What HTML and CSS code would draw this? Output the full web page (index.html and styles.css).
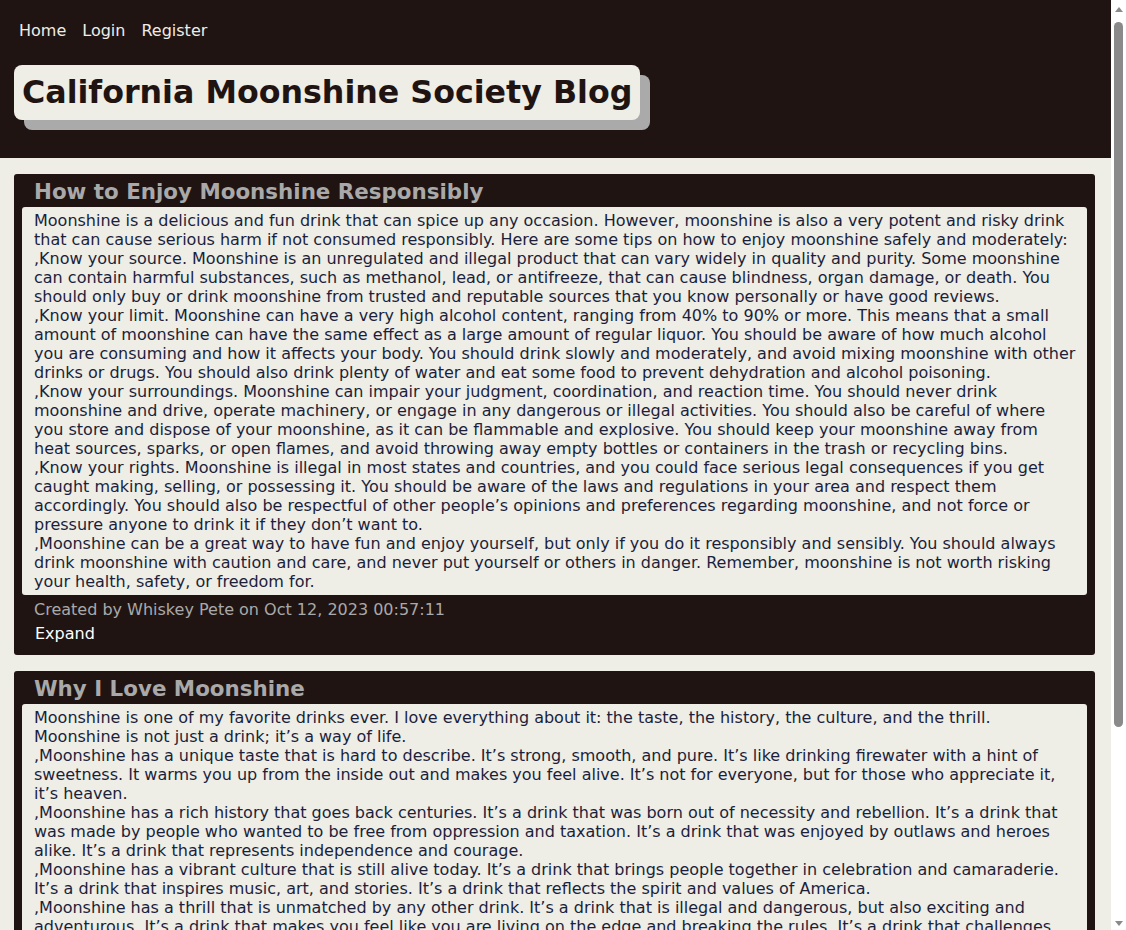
FILE: index.html
```html
<!DOCTYPE html>
<html lang="en">
<head>
<meta charset="utf-8">
<title>California Moonshine Society Blog</title>
<link rel="stylesheet" href="styles.css">
</head>
<body>
<header class="site-header">
  <nav class="nav">
    <a href="#" class="nav-link">Home</a>
    <a href="#" class="nav-link">Login</a>
    <a href="#" class="nav-link">Register</a>
  </nav>
  <div class="title-wrap">
    <h1 class="site-title">California Moonshine Society Blog</h1>
  </div>
</header>
<main class="posts">
  <article class="post">
    <h2 class="post-title">How to Enjoy Moonshine Responsibly</h2>
    <div class="post-body">Moonshine is a delicious and fun drink that can spice up any occasion. However, moonshine is also a very potent and risky drink that can cause serious harm if not consumed responsibly. Here are some tips on how to enjoy moonshine safely and moderately:<br>,Know your source. Moonshine is an unregulated and illegal product that can vary widely in quality and purity. Some moonshine can contain harmful substances, such as methanol, lead, or antifreeze, that can cause blindness, organ damage, or death. You should only buy or drink moonshine from trusted and reputable sources that you know personally or have good reviews.<br>,Know your limit. Moonshine can have a very high alcohol content, ranging from 40% to 90% or more. This means that a small amount of moonshine can have the same effect as a large amount of regular liquor. You should be aware of how much alcohol you are consuming and how it affects your body. You should drink slowly and moderately, and avoid mixing moonshine with other drinks or drugs. You should also drink plenty of water and eat some food to prevent dehydration and alcohol poisoning.<br>,Know your surroundings. Moonshine can impair your judgment, coordination, and reaction time. You should never drink moonshine and drive, operate machinery, or engage in any dangerous or illegal activities. You should also be careful of where you store and dispose of your moonshine, as it can be flammable and explosive. You should keep your moonshine away from heat sources, sparks, or open flames, and avoid throwing away empty bottles or containers in the trash or recycling bins.<br>,Know your rights. Moonshine is illegal in most states and countries, and you could face serious legal consequences if you get caught making, selling, or possessing it. You should be aware of the laws and regulations in your area and respect them accordingly. You should also be respectful of other people’s opinions and preferences regarding moonshine, and not force or pressure anyone to drink it if they don’t want to.<br>,Moonshine can be a great way to have fun and enjoy yourself, but only if you do it responsibly and sensibly. You should always drink moonshine with caution and care, and never put yourself or others in danger. Remember, moonshine is not worth risking your health, safety, or freedom for.</div>
    <div class="post-meta">Created by Whiskey Pete on Oct 12, 2023 00:57:11</div>
    <a href="#" class="post-expand">Expand</a>
  </article>
  <article class="post">
    <h2 class="post-title">Why I Love Moonshine</h2>
    <div class="post-body">Moonshine is one of my favorite drinks ever. I love everything about it: the taste, the history, the culture, and the thrill. Moonshine is not just a drink; it’s a way of life.<br>,Moonshine has a unique taste that is hard to describe. It’s strong, smooth, and pure. It’s like drinking firewater with a hint of sweetness. It warms you up from the inside out and makes you feel alive. It’s not for everyone, but for those who appreciate it, it’s heaven.<br>,Moonshine has a rich history that goes back centuries. It’s a drink that was born out of necessity and rebellion. It’s a drink that was made by people who wanted to be free from oppression and taxation. It’s a drink that was enjoyed by outlaws and heroes alike. It’s a drink that represents independence and courage.<br>,Moonshine has a vibrant culture that is still alive today. It’s a drink that brings people together in celebration and camaraderie. It’s a drink that inspires music, art, and stories. It’s a drink that reflects the spirit and values of America.<br>,Moonshine has a thrill that is unmatched by any other drink. It’s a drink that is illegal and dangerous, but also exciting and adventurous. It’s a drink that makes you feel like you are living on the edge and breaking the rules. It’s a drink that challenges you to be bold and brave.<br>,That’s why I love moonshine. It’s more than a drink; it’s a passion.</div>
    <div class="post-meta">Created by Whiskey Pete on Oct 11, 2023 21:14:03</div>
    <a href="#" class="post-expand">Expand</a>
  </article>
</main>
<div class="scrollbar" aria-hidden="true">
  <div class="scroll-arrow scroll-arrow-up"></div>
  <div class="scroll-thumb"></div>
  <div class="scroll-arrow scroll-arrow-down"></div>
</div>
</body>
</html>
```

FILE: styles.css
```css
html, body {
  margin: 0;
  padding: 0;
}

body {
  background: #eeede6;
  font-family: "DejaVu Sans", Verdana, sans-serif;
  font-size: 16px;
  line-height: 19px;
  color: #1b1f3b;
  margin-right: 15px;
}

.site-header {
  background: #201412;
  padding: 21px 0 38px 0;
}

.nav {
  display: flex;
  gap: 16px;
  padding: 0 19px;
  height: 19px;
}

.nav-link {
  color: #eeede6;
  text-decoration: none;
  font-size: 16px;
  line-height: 19px;
}

.title-wrap {
  padding: 25px 0 0 14px;
}

.site-title {
  display: inline-block;
  margin: 0;
  padding: 7px 8px;
  background: #eeede6;
  color: #201412;
  font-size: 31.7px;
  line-height: 41px;
  font-weight: bold;
  border-radius: 8px;
  box-shadow: 10px 10px 0 #aaaaaa;
}

.posts {
  display: flex;
  flex-direction: column;
  gap: 16px;
  padding: 16px 16px 16px 14px;
}

.post {
  background: #201412;
  border-radius: 3px;
  padding: 0 8px 12px 8px;
  display: flex;
  flex-direction: column;
  align-items: flex-start;
}

.post-title {
  margin: 0;
  padding: 5px 12px 2px 12px;
  font-size: 21.4px;
  line-height: 26px;
  font-weight: bold;
  color: #a9a9a9;
}

.post-body {
  align-self: stretch;
  background: #eeede6;
  border-radius: 3px;
  padding: 4px 10px 4px 12px;
  color: #1b1f3b;
}

.post-meta {
  padding: 5px 12px 0 12px;
  color: #a9a9a9;
}

.post-expand {
  margin: 5px 0 0 13px;
  color: #ffffff;
  text-decoration: none;
}

.scrollbar {
  position: fixed;
  top: 0;
  right: 0;
  width: 15px;
  height: 100vh;
  background: #ffffff;
  display: flex;
  flex-direction: column;
  align-items: center;
}

.scroll-arrow {
  width: 0;
  height: 0;
  border-left: 4px solid transparent;
  border-right: 4px solid transparent;
}

.scroll-arrow-up {
  margin-top: 7px;
  border-bottom: 5px solid #8a8a8a;
}

.scroll-arrow-down {
  margin-bottom: 4px;
  border-top: 5px solid #8a8a8a;
}

.scroll-thumb {
  width: 9px;
  height: 705px;
  margin-top: 10px;
  border-radius: 5px;
  background: #8a8a8a;
  margin-bottom: auto;
}
```
